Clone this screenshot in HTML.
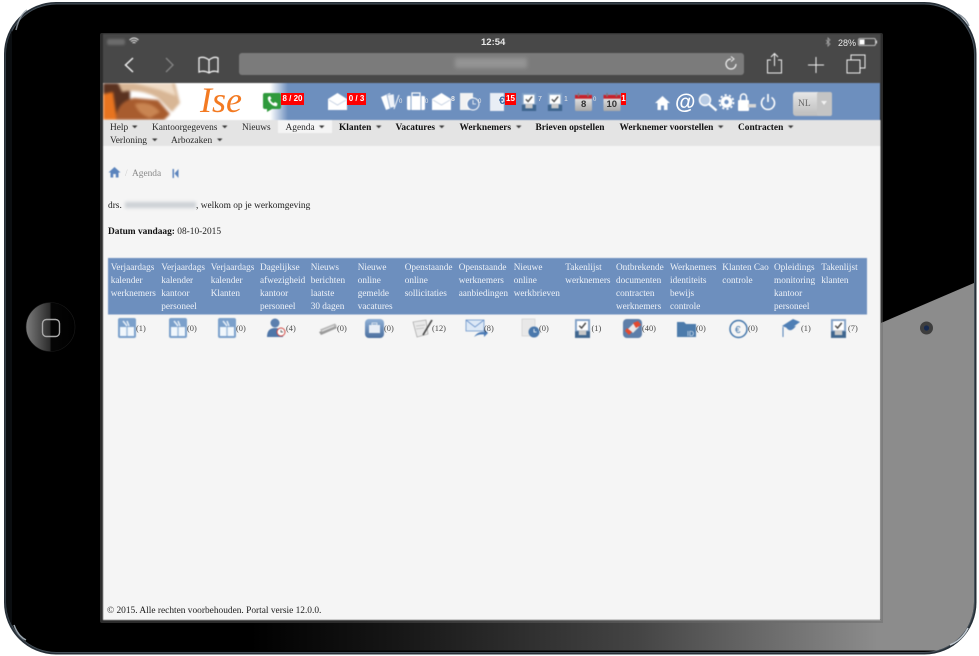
<!DOCTYPE html>
<html><head><meta charset="utf-8"><title>Ise</title>
<style>
html,body{margin:0;padding:0;background:#fff;}
body{width:979px;height:656px;overflow:hidden;position:relative;font-family:"Liberation Serif",serif;}
svg.abs{position:absolute;left:0;top:0;}
#txt{position:absolute;left:0;top:0;width:979px;height:656px;filter:blur(.3px);}
.t{position:absolute;white-space:nowrap;line-height:13px;font-size:9.4px;color:#1c1c1c;}
.m{font-size:9.4px;color:#2a2a2a;}
.b{font-weight:bold;color:#111;}
.h{color:#eef2f8;font-size:9.25px;line-height:13px;}
.c{font-size:8.4px;color:#4a4a4a;}
.bd{position:absolute;background:#f00;color:#fff;font:bold 8px/12px "Liberation Sans",sans-serif;text-align:center;white-space:nowrap;}
.s{position:absolute;color:#e8e8e8;font:8px/12px "Liberation Sans",sans-serif;white-space:nowrap;}
</style></head><body>
<svg class="abs" width="979" height="656" viewBox="0 0 979 656">
<defs>
<linearGradient id="bot" x1="0" x2="1" y1="0" y2="0"><stop offset="0" stop-color="#000"/><stop offset=".2" stop-color="#161616"/><stop offset=".53" stop-color="#444"/><stop offset=".86" stop-color="#8c8c8c"/><stop offset="1" stop-color="#8f8f8f"/></linearGradient>
<linearGradient id="fr" gradientUnits="userSpaceOnUse" x1="350" x2="881" y1="0" y2="0"><stop offset="0" stop-color="#2c2c2c"/><stop offset="1" stop-color="#7c7c7c"/></linearGradient>
<linearGradient id="hb" x1="0" x2="1" y1="0" y2="0"><stop offset="0" stop-color="#7c7c7c"/><stop offset=".5" stop-color="#2a2a2a"/><stop offset=".5" stop-color="#050505"/><stop offset="1" stop-color="#000"/></linearGradient>
<linearGradient id="fade" x1="0" x2="1" y1="0" y2="0"><stop offset="0" stop-color="#fff"/><stop offset="1" stop-color="#6d8fbe"/></linearGradient>
<linearGradient id="sel" x1="0" x2="0" y1="0" y2="1"><stop offset="0" stop-color="#e6e6e6"/><stop offset="1" stop-color="#bdbdbd"/></linearGradient>
<linearGradient id="ib" x1="0" x2="0" y1="0" y2="1"><stop offset="0" stop-color="#8fb0d6"/><stop offset="1" stop-color="#4b6f9f"/></linearGradient>
<linearGradient id="cb" x1="0" x2="0" y1="0" y2="1"><stop offset="0" stop-color="#f0f0f0"/><stop offset="1" stop-color="#a9a9a9"/></linearGradient>
<clipPath id="dev"><rect x="6" y="4" width="968" height="648" rx="50"/></clipPath>
<clipPath id="lg"><rect x="103" y="83" width="80" height="37"/></clipPath>
<symbol id="env" viewBox="0 0 19 17"><path d="M0 6 L9.5 0 L19 6 V17 H0Z" fill="#fff"/><path d="M1 7 L9.5 12 L18 7" fill="none" stroke="#c9d4e4" stroke-width="1"/></symbol>
<symbol id="chk" viewBox="0 0 16 20"><rect x="0" y="0" width="16" height="20" fill="#7f9fc6"/><rect x="2" y="2" width="12" height="10" fill="#fff"/><path d="M4.5 7 L7 9.5 L11.5 4" fill="none" stroke="#444" stroke-width="1.5"/><rect x="0" y="13" width="16" height="7" fill="#3f668f"/><rect x="4" y="12" width="8" height="5" fill="#c8c8c8"/></symbol>
<symbol id="cal" viewBox="0 0 18 19"><rect x="0" y="2" width="18" height="17" rx="1.5" fill="url(#cb)"/><rect x="0" y="2" width="18" height="4" fill="#c8202a"/><rect x="3" y="0" width="1.5" height="4" fill="#777"/><rect x="13" y="0" width="1.5" height="4" fill="#777"/></symbol>
<symbol id="gift" viewBox="0 0 18 20"><rect width="18" height="20" rx="2" fill="#7ba0cb"/><rect x="2" y="9" width="14" height="9" fill="#f1f7fc"/><rect x="8.300" y="9" width="1.400" height="9" fill="#9dbbdc"/><path d="M5 3 L9 8 M9 3 L11 8" stroke="#e6eff8" stroke-width="1.5"/></symbol>
</defs>

<!-- device -->
<rect x="4" y="2" width="972.5" height="652.5" rx="52" fill="#262f37"/>
<rect x="5.5" y="3.5" width="969.5" height="649.5" rx="51" fill="#465059"/>
<rect x="6.5" y="4.5" width="967.5" height="647.5" rx="50" fill="#000"/>
<g clip-path="url(#dev)">
<rect x="250" y="621" width="730" height="29.500" fill="url(#bot)"/>
<polygon points="881,323 974,283 974,650.500 881,650.500" fill="#8c8c8c"/>
<rect x="6" y="0" width="6" height="656" fill="#0a0d10"/>
</g>
<path d="M16 30 Q20 14 27 10" fill="none" stroke="#9aa4ac" stroke-width="1.5" opacity=".8"/>
<path d="M958 14 Q966 18 969 26" fill="none" stroke="#8c96a0" stroke-width="1.5"/>
<path d="M14 625 Q18 636 26 640" fill="none" stroke="#9aa4ac" stroke-width="1.5"/>
<path d="M950 645 Q962 640 968 628" fill="none" stroke="#c0c8d0" stroke-width="1.5"/>

<!-- home button, camera -->
<circle cx="50.5" cy="327" r="24.5" fill="url(#hb)" stroke="#1a1a1a" stroke-width=".6"/>
<rect x="42.5" y="319.5" width="17" height="17" rx="4" fill="none" stroke="#a8a8a8" stroke-width="1.4"/>
<circle cx="926.5" cy="328" r="6.5" fill="#3e3e3e"/><circle cx="926.5" cy="328" r="2.6" fill="#16294f"/>

<!-- screen frame -->
<rect x="100" y="33" width="783" height="590" rx="2" fill="#2c2c2c"/>
<polygon points="881,323 883,322 883,623 250,623 250,620 881,620" fill="url(#fr)"/>

<g style="filter:blur(.4px)">
<rect x="103" y="34" width="777.5" height="49" fill="#484848"/>
<rect x="103" y="83" width="777" height="37" fill="#6d8fbe"/>
<rect x="103" y="120" width="777.5" height="26" fill="#e4e4e4"/>
<rect x="103" y="146" width="777.5" height="474" fill="#f5f5f5"/>
<rect x="278" y="120" width="54" height="13" fill="#f5f5f5"/>

<!-- safari toolbar -->
<rect x="239" y="53" width="505" height="22" rx="3" fill="#7b7b7b"/>
<g fill="none" stroke="#f0f0f0" stroke-width="1.3">
<path d="M133 58 L125.500 65 L133 72" stroke-width="1.5"/>
<path d="M166 58 L173 65 L166 72" stroke="#858585"/>
<path d="M199 58 Q204 56 209 60 Q214 56 218 58 V72 Q213 70 209 73 Q204 70 199 72Z M209 60 V73"/>
<path d="M731 59 a5 5 0 1 0 5 5" stroke-width="1.2"/><path d="M731 56.500 L734 59 L731 61.500" stroke-width="1"/>
<path d="M771 60 H767.500 V73 H781.500 V60 H778 M774.500 66 V54 M771 57 L774.500 53.500 L778 57" stroke-width="1"/>
<path d="M808 65 H824 M816 57 V73" stroke-width="1"/>
<rect x="847" y="60" width="13" height="13" stroke-width="1"/><path d="M851 60 V55 H865 V68 H860" stroke-width="1"/>
</g>
<!-- status icons -->
<rect x="107" y="39" width="18" height="6" rx="2" fill="#8a8a8a" opacity=".55" filter="blur(1px)"/>
<path d="M129.500 40 Q134 36 138.500 40 M131 41.500 Q134 39 137 41.500 M132.500 43 Q134 42 135.500 43" fill="none" stroke="#eee" stroke-width="1"/>
<path d="M826 40 L830 44 L828 46 V38 L830 40 L826 44" fill="none" stroke="#aaa" stroke-width=".8"/>
<rect x="858.500" y="38.500" width="17" height="7" rx="1.500" fill="none" stroke="#ddd" stroke-width=".8"/><rect x="859.500" y="39.500" width="5" height="5" fill="#fff"/><rect x="876" y="40.500" width="1" height="3" fill="#ddd"/>

<!-- logo -->
<rect x="103" y="83" width="170" height="37" fill="#fff"/>
<rect x="270" y="83" width="18" height="37" fill="url(#fade)"/>
<g clip-path="url(#lg)"><g style="filter:blur(1.2px)">
<rect x="103" y="83" width="27" height="37" fill="#5a3220"/>
<path d="M103 94 L113 92 L117 120 H103Z" fill="#e8741f"/>
<path d="M118 83 H175 L180 103 L172 112 L158 98 Q140 88 122 92Z" fill="#d8b695"/>
<path d="M134 83 H172 L176 96 L160 90Z" fill="#f0dcc6"/>
<path d="M116 120 Q116 102 134 98 L158 100 L170 114 L164 120Z" fill="#a85c2e"/>
<path d="M135 104 Q150 100 160 112 L150 118 Q138 114 135 104Z" fill="#c98552"/>
</g></g>

<!-- header icons -->
<path d="M265 93 H279 a2 2 0 0 1 2 2 V107 a2 2 0 0 1 -2 2 H272 L267 112 V109 H265 a2 2 0 0 1 -2 -2 V95 a2 2 0 0 1 2 -2Z" fill="#2f9a3c"/>
<path d="M268 97 q-1 3 2.500 6.500 q3.500 3.500 6.500 2.500 l.5 -2.500 l-2.500 -1.500 l-1.300 1.300 q-2.500 -1 -3.500 -3.500 l1.300 -1.300 l-1.500 -2.500z" fill="#fff"/>
<use href="#env" x="328" y="93" width="19" height="17"/>
<path d="M381 97 L390 93 L394 107 L386 110Z" fill="#fff"/><path d="M387 95 L394 94 L395 107 L390 108Z" fill="#eef2f8" stroke="#6d8fbe" stroke-width=".6"/><path d="M399 95 L394 109" stroke="#fff" stroke-width="1"/>
<rect x="407" y="96" width="18" height="14" rx="1.500" fill="#fff"/><rect x="412" y="93" width="8" height="4" fill="none" stroke="#fff" stroke-width="1.200"/><path d="M411 96 V110 M421 96 V110" stroke="#6d8fbe" stroke-width=".8"/>
<use href="#env" x="432" y="93" width="19" height="17"/>
<rect x="460" y="93" width="13" height="17" fill="#f2f2f2"/><circle cx="473" cy="104" r="6" fill="#6d8fbe" stroke="#fff" stroke-width="1"/><path d="M473 100 V104 H476" stroke="#fff" fill="none" stroke-width=".8"/>
<rect x="490" y="93" width="14" height="18" fill="#e9eef5"/>
<use href="#chk" x="521" y="93" width="16" height="18"/>
<use href="#chk" x="547" y="93" width="16" height="18"/>
<use href="#cal" x="575" y="93" width="17" height="18"/>
<use href="#cal" x="603" y="93" width="18" height="18"/>
<path d="M655 103 L662.500 96 L670 103 H667.500 V110 H664 V105.500 H661 V110 H657.500 V103Z" fill="#fff"/>
<circle cx="705" cy="100" r="5.500" fill="#b7cae3" stroke="#fff" stroke-width="1.400"/><path d="M709 104 L716.500 110.500" stroke="#fff" stroke-width="2.400"/>
<circle cx="726.500" cy="102" r="5.800" fill="#fff"/><circle cx="726.500" cy="102" r="7" fill="none" stroke="#fff" stroke-width="1.800" stroke-dasharray="2.200 2.200"/><circle cx="726.500" cy="102" r="2.200" fill="#6d8fbe"/>
<rect x="738" y="100" width="11" height="11" rx="1" fill="#fff"/><path d="M740.500 100 V97 a3 3 0 0 1 6 0 V100" fill="none" stroke="#fff" stroke-width="1.500"/><rect x="748" y="104" width="8" height="3.500" fill="#d6d6d6"/>
<path d="M764.500 97.500 a6.500 6.500 0 1 0 7 0 M768 94 V102" fill="none" stroke="#fff" stroke-width="1.600"/>
<rect x="793" y="92" width="39" height="24" rx="3" fill="url(#sel)"/><rect x="817" y="92" width="15" height="24" rx="2" fill="#c4c4c4"/><path d="M821 101 H827 L824 105Z" fill="#f2f2f2"/>

<!-- carets -->
<g fill="#333">
<path d="M132 125.500h5.500l-2.750 2.800z"/><path d="M222 125.500h5.500l-2.750 2.800z"/><path d="M319 125.500h5.500l-2.750 2.800z"/><path d="M376 125.500h5.500l-2.750 2.800z"/><path d="M439 125.500h5.500l-2.750 2.800z"/><path d="M516 125.500h5.500l-2.750 2.800z"/><path d="M718 125.500h5.500l-2.750 2.800z"/><path d="M788 125.500h5.500l-2.750 2.800z"/><path d="M152 138.500h5.500l-2.750 2.800z"/><path d="M217 138.500h5.500l-2.750 2.800z"/>
</g>

<!-- breadcrumb -->
<path d="M108.500 172.500 L114.500 167 L120.500 172.500 H118.500 V177.500 H115.800 V174 H113.200 V177.500 H110.500 V172.500Z" fill="#5b84bd"/>
<path d="M172.500 169 H174 V178 H172.500Z M178.500 169 V178 L174.500 173.500Z" fill="#5b84bd"/>
<rect x="125" y="202" width="71" height="6" fill="#aab2bb" opacity=".55" filter="blur(1.500px)"/>
<rect x="455" y="58" width="72" height="10" fill="#a5a5a5" opacity=".6" filter="blur(2px)"/>

<!-- table -->
<rect x="108" y="258" width="759" height="56.500" fill="#6d8fbe"/>
<use href="#gift" x="118" y="318" width="18" height="20"/>
<use href="#gift" x="169" y="318" width="18" height="20"/>
<use href="#gift" x="218" y="318" width="18" height="20"/>
<circle cx="275" cy="323" r="4.500" fill="#5b7fae"/><path d="M267 337 Q267 328 275 328 Q283 328 283 337Z" fill="#4f76a8"/><circle cx="281" cy="332" r="4" fill="#fff" stroke="#d0453f" stroke-width="1"/><path d="M281 330 V332 H283" stroke="#333" fill="none" stroke-width=".7"/>
<path d="M319 332 L335 325 L337 328 L321 335Z" fill="#9a9a9a"/><path d="M320 329.500 L335 323.500 L337 326 L322 332Z" fill="#b5b5b5"/><path d="M322 331 L334 326" stroke="#e2e2e2" stroke-width="1"/>
<rect x="365" y="319" width="19" height="19" rx="4" fill="url(#ib)"/><rect x="369" y="325" width="11" height="8" fill="#e8eef6"/><rect x="372" y="323" width="5" height="2" fill="none" stroke="#e8eef6" stroke-width=".8"/>
<path d="M413 322 L426 320 L428 334 L417 337Z" fill="#e9e9e9" stroke="#999" stroke-width=".6"/><path d="M432 320 L423 335" stroke="#444" stroke-width="1.600"/><path d="M416 326 L425 325 M416 329 L424 328" stroke="#aaa" stroke-width=".6"/>
<path d="M466 320 H484 V331 H466Z" fill="#dce8f6" stroke="#6a93c9" stroke-width=".8"/><path d="M466 320 L475 327 L484 320" fill="none" stroke="#6a93c9" stroke-width=".8"/><path d="M474 337 Q478 331 484 332 V329 L488 333 L484 337 V334.500 Q478 334 474 337Z" fill="#4a7ab5"/>
<rect x="522" y="319" width="13" height="17" fill="#e8e8e8" stroke="#ccc" stroke-width=".6"/><circle cx="534" cy="332" r="5.500" fill="#4a78ac"/><path d="M534 329 V332 H536.500" stroke="#fff" fill="none" stroke-width=".8"/>
<use href="#chk" x="575" y="319" width="15" height="19"/>
<rect x="623" y="319" width="19" height="19" rx="4" fill="#5d7ea9"/><path d="M628 329 L634 323 L639 327 L633 333Z" fill="#e8e8e8"/><path d="M633 323 L638 321 L641 325 L636 328Z" fill="#e24a30"/><path d="M627 328 L632 332 L629 335 L625 331Z" fill="#e24a30"/>
<path d="M677 322 H684 L686 324 H696 V337 H677Z" fill="#4c7bab"/><text x="687" y="336" font-family="Liberation Sans" font-size="7" fill="#dfe9f4">ID</text>
<circle cx="738.500" cy="329" r="8.500" fill="none" stroke="#4577ab" stroke-width="1.500"/><text x="735" y="333" font-family="Liberation Sans" font-size="10" fill="#4577ab">€</text>
<path d="M782 326 L793 319 L800 322 L790 329Z" fill="#4f7fb5"/><path d="M786 327 Q790 334 796 326" fill="#4f7fb5"/><path d="M783 327 V337" stroke="#4f7fb5" stroke-width="1"/>
<use href="#chk" x="831" y="319" width="15" height="19"/>
</g>
</svg>

<div id="txt">
<div class="s" style="left:481px;top:37px;font-size:9.500px;font-weight:bold;">12:54</div>
<div class="s" style="left:838px;top:37px;font-size:9px;">28%</div>

<div class="t" style="left:200px;top:96px;line-height:8px;font-size:36px;font-style:italic;color:#f37a22;">Ise</div>

<div class="bd" style="left:281px;top:93px;width:23px;">8 / 20</div>
<div class="bd" style="left:347px;top:93px;width:19px;">0 / 3</div>
<div class="bd" style="left:505px;top:93px;width:11px;">15</div>
<div class="bd" style="left:621px;top:93px;width:5px;">1</div>
<div class="t" style="left:499px;top:94px;font:bold 11px/14px 'Liberation Sans',sans-serif;color:#3f6ea8;">€</div>
<div class="t" style="left:581px;top:99px;font:bold 9.500px/12px 'Liberation Sans',sans-serif;color:#333;">8</div>
<div class="t" style="left:606.500px;top:99px;font:bold 9.500px/12px 'Liberation Sans',sans-serif;color:#333;">10</div>
<div class="s" style="left:399px;top:96px;font-size:6px;">0</div>
<div class="s" style="left:425px;top:96px;font-size:6px;">0</div>
<div class="s" style="left:451px;top:94px;font-size:7px;font-weight:bold;">8</div>
<div class="s" style="left:478px;top:96px;font-size:6px;">0</div>
<div class="s" style="left:538px;top:94px;font-size:7px;">7</div>
<div class="s" style="left:564px;top:94px;font-size:7px;">1</div>
<div class="s" style="left:593px;top:94px;font-size:6px;">0</div>
<div class="t" style="left:675px;top:94px;font:bold 21px/18px 'Liberation Sans',sans-serif;color:#fff;">@</div>
<div class="t" style="left:798px;top:98px;font-size:9.500px;color:#666;">NL</div>

<div class="t m" style="left:110px;top:122px;">Help</div>
<div class="t m" style="left:152px;top:122px;">Kantoorgegevens</div>
<div class="t m" style="left:242px;top:122px;">Nieuws</div>
<div class="t m" style="left:285.500px;top:122px;">Agenda</div>
<div class="t m b" style="left:339px;top:122px;">Klanten</div>
<div class="t m b" style="left:395.500px;top:122px;">Vacatures</div>
<div class="t m b" style="left:459.500px;top:122px;">Werknemers</div>
<div class="t m b" style="left:535.500px;top:122px;">Brieven opstellen</div>
<div class="t m b" style="left:619.500px;top:122px;">Werknemer voorstellen</div>
<div class="t m b" style="left:738px;top:122px;">Contracten</div>
<div class="t m" style="left:110px;top:135px;">Verloning</div>
<div class="t m" style="left:171px;top:135px;">Arbozaken</div>

<div class="t" style="left:125px;top:168px;color:#ccc;">/</div>
<div class="t" style="left:132px;top:168px;color:#888;">Agenda</div>
<div class="t" style="left:108px;top:200px;">drs.</div>
<div class="t" style="left:196px;top:200px;">, welkom op je werkomgeving</div>
<div class="t" style="left:108px;top:226px;"><b style="color:#111">Datum vandaag:</b> 08-10-2015</div>

<div class="t h" style="left:110.700px;top:262px;">Verjaardags<br>kalender<br>werknemers</div>
<div class="t h" style="left:161.300px;top:262px;">Verjaardags<br>kalender<br>kantoor<br>personeel</div>
<div class="t h" style="left:210.700px;top:262px;">Verjaardags<br>kalender<br>Klanten</div>
<div class="t h" style="left:260px;top:262px;">Dagelijkse<br>afwezigheid<br>kantoor<br>personeel</div>
<div class="t h" style="left:310.700px;top:262px;">Nieuws<br>berichten<br>laatste<br>30 dagen</div>
<div class="t h" style="left:357.700px;top:262px;">Nieuwe<br>online<br>gemelde<br>vacatures</div>
<div class="t h" style="left:404.700px;top:262px;">Openstaande<br>online<br>sollicitaties</div>
<div class="t h" style="left:458.700px;top:262px;">Openstaande<br>werknemers<br>aanbiedingen</div>
<div class="t h" style="left:513.700px;top:262px;">Nieuwe<br>online<br>werkbrieven</div>
<div class="t h" style="left:565.300px;top:262px;">Takenlijst<br>werknemers</div>
<div class="t h" style="left:616px;top:262px;">Ontbrekende<br>documenten<br>contracten<br>werknemers</div>
<div class="t h" style="left:670px;top:262px;">Werknemers<br>identiteits<br>bewijs<br>controle</div>
<div class="t h" style="left:722.300px;top:262px;">Klanten Cao<br>controle</div>
<div class="t h" style="left:774px;top:262px;">Opleidings<br>monitoring<br>kantoor<br>personeel</div>
<div class="t h" style="left:821.300px;top:262px;">Takenlijst<br>klanten</div>

<div class="t c" style="left:136px;top:321.500px;">(1)</div>
<div class="t c" style="left:187px;top:321.500px;">(0)</div>
<div class="t c" style="left:236px;top:321.500px;">(0)</div>
<div class="t c" style="left:286px;top:321.500px;">(4)</div>
<div class="t c" style="left:337px;top:321.500px;">(0)</div>
<div class="t c" style="left:384px;top:321.500px;">(0)</div>
<div class="t c" style="left:432px;top:321.500px;">(12)</div>
<div class="t c" style="left:484px;top:321.500px;">(8)</div>
<div class="t c" style="left:539px;top:321.500px;">(0)</div>
<div class="t c" style="left:591.500px;top:321.500px;">(1)</div>
<div class="t c" style="left:642px;top:321.500px;">(40)</div>
<div class="t c" style="left:696px;top:321.500px;">(0)</div>
<div class="t c" style="left:748px;top:321.500px;">(0)</div>
<div class="t c" style="left:801px;top:321.500px;">(1)</div>
<div class="t c" style="left:848px;top:321.500px;">(7)</div>

<div class="t" style="left:107px;top:604.500px;">© 2015. Alle rechten voorbehouden. Portal versie 12.0.0.</div>
</div>
</body></html>
